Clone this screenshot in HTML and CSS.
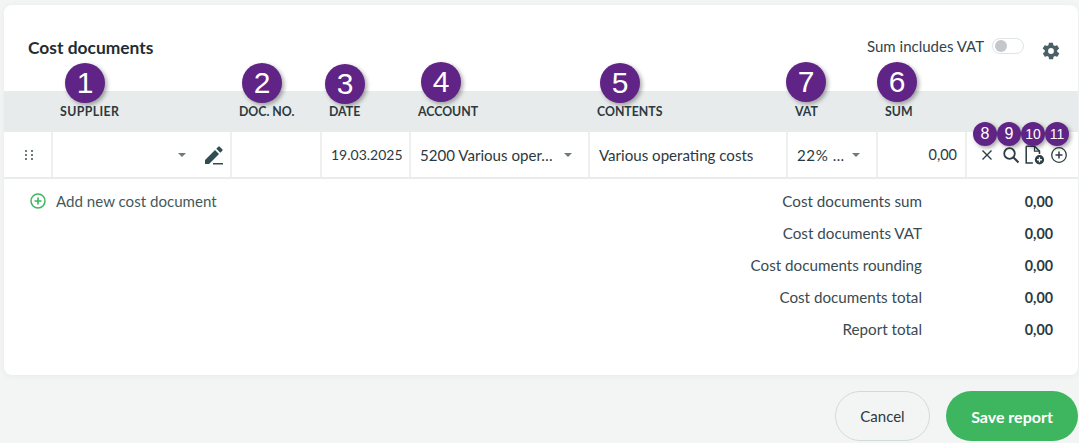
FILE: index.html
```html
<!DOCTYPE html>
<html lang="en">
<head>
<meta charset="utf-8">
<title>Cost documents</title>
<link rel="stylesheet" href="styles.css">
</head>
<body>
<main class="page">
  <section class="card">
    <header class="card-head">
      <h2 class="title">Cost documents</h2>
      <div class="head-tools">
        <span class="toggle-label">Sum includes VAT</span>
        <span class="toggle"><span class="knob"></span></span>
        <svg class="gear" viewBox="0 0 24 24" width="20" height="20"><path fill="#4a5f66" d="M19.4 13a7.6 7.6 0 0 0 0-2l2.1-1.6a.5.5 0 0 0 .1-.7l-2-3.4a.5.5 0 0 0-.6-.2l-2.5 1a7.3 7.3 0 0 0-1.7-1l-.4-2.700a.5.500 0 0 0-.5-.4h-4a.5.500 0 0 0-.5.400l-.4 2.700a7.600 7.600 0 0 0-1.700 1l-2.500-1a.5.500 0 0 0-.6.200l-2 3.400a.5.500 0 0 0 .1.700L4.600 11a7.600 7.600 0 0 0 0 2l-2.100 1.600a.5.500 0 0 0-.1.700l2 3.400c.1.200.4.300.6.200l2.500-1c.5.400 1.100.7 1.700 1l.4 2.700c0 .2.200.4.500.4h4c.3 0 .5-.2.500-.4l.4-2.700c.6-.3 1.200-.6 1.700-1l2.500 1c.2.100.5 0 .6-.2l2-3.400a.5.500 0 0 0-.1-.7L19.400 13zM12 15.500a3.500 3.500 0 1 1 0-7 3.500 3.500 0 0 1 0 7z"/></svg>
      </div>
    </header>

    <div class="table">
      <div class="row row-head">
        <div class="th"></div>
        <div class="th th-wide">SUPPLIER<span class="badge big b1">1</span></div>
        <div class="th">DOC. NO.<span class="badge big b2">2</span></div>
        <div class="th">DATE<span class="badge big b3">3</span></div>
        <div class="th">ACCOUNT<span class="badge big b4">4</span></div>
        <div class="th">CONTENTS<span class="badge big b5">5</span></div>
        <div class="th">VAT<span class="badge big b7">7</span></div>
        <div class="th">SUM<span class="badge big b6">6</span></div>
        <div class="th"></div>
      </div>
      <div class="row row-body">
        <div class="td td-drag">
          <svg viewBox="0 0 8 10" width="8" height="10"><g fill="#6d7a7f"><rect x="0" y="0" width="2" height="2"/><rect x="6" y="0" width="2" height="2"/><rect x="0" y="4" width="2" height="2"/><rect x="6" y="4" width="2" height="2"/><rect x="0" y="8" width="2" height="2"/><rect x="6" y="8" width="2" height="2"/></g></svg>
        </div>
        <div class="td td-supplier">
          <span class="caret"></span>
          <svg class="pen" viewBox="0 0 20 20" width="20" height="20"><path fill="#2f4d52" d="M1 15 11 5l4 4L5 19H1zM12.300 3.700l2-2a1 1 0 0 1 1.400 0l2.600 2.600a1 1 0 0 1 0 1.400l-2 2zM9 18h10v1.400H9z"/></svg>
        </div>
        <div class="td"></div>
        <div class="td td-date">19.03.2025</div>
        <div class="td td-select"><span class="ellip">5200 Various oper…</span><span class="caret"></span></div>
        <div class="td">Various operating costs</div>
        <div class="td td-select"><span class="ellip ellip-wide">22% …</span><span class="caret"></span></div>
        <div class="td td-num">0,00</div>
        <div class="td td-actions">
          <span class="action"><svg viewBox="0 0 16 16" width="16" height="16"><path d="M3.500 3.500l9 9M12.500 3.500l-9 9" stroke="#2c3e44" stroke-width="1.400" fill="none"/></svg><span class="badge small b8">8</span></span>
          <span class="action"><svg viewBox="0 0 18 18" width="18" height="18"><circle cx="7.500" cy="7.500" r="5.300" stroke="#2c3e44" stroke-width="1.800" fill="none"/><path d="M11.500 11.500l5 5" stroke="#2c3e44" stroke-width="2" fill="none"/></svg><span class="badge small b9">9</span></span>
          <span class="action"><svg viewBox="0 0 19 18" width="21" height="20"><path d="M2 1h7.500L14 5.500V8M2 1v15.300h6" stroke="#2c3e44" stroke-width="1.400" fill="none"/><path d="M9.500 1v4.500H14" stroke="#2c3e44" stroke-width="1.100" fill="none"/><circle cx="14" cy="13.300" r="4.200" fill="#2c3e44"/><path d="M11.800 13.300h4.400M14 11.100v4.400" stroke="#fff" stroke-width="1.200"/></svg><span class="badge small b10">10</span></span>
          <span class="action"><svg viewBox="0 0 18 18" width="18" height="18"><circle cx="9" cy="9" r="7.300" stroke="#2c3e44" stroke-width="1.300" fill="none"/><path d="M5.500 9h7M9 5.500v7" stroke="#2c3e44" stroke-width="1.500"/></svg><span class="badge small b11">11</span></span>
        </div>
      </div>
    </div>

    <div class="lower">
      <a class="add-link">
        <svg viewBox="0 0 18 18" width="18" height="18"><circle cx="9" cy="9" r="7" stroke="#3eb660" stroke-width="1.500" fill="none"/><path d="M5.500 9h7M9 5.500v7" stroke="#3eb660" stroke-width="1.600"/></svg>
        <span>Add new cost document</span>
      </a>
      <dl class="totals">
        <div class="total"><dt>Cost documents sum</dt><dd>0,00</dd></div>
        <div class="total"><dt>Cost documents VAT</dt><dd>0,00</dd></div>
        <div class="total"><dt>Cost documents rounding</dt><dd>0,00</dd></div>
        <div class="total"><dt>Cost documents total</dt><dd>0,00</dd></div>
        <div class="total"><dt>Report total</dt><dd>0,00</dd></div>
      </dl>
    </div>
  </section>

  <footer class="actions">
    <button class="btn btn-cancel">Cancel</button>
    <button class="btn btn-save">Save report</button>
  </footer>
</main>
</body>
</html>
```

FILE: styles.css
```css
* { box-sizing: border-box; }
html, body { margin: 0; height: 100%; }
body {
  background: #f3f5f5;
  font-family: "Lato", "Noto Sans", sans-serif;
  color: #2c3a40;
  font-size: 15px;
  overflow: hidden;
}
.page { padding: 5px 1px 0 4px; }
.card {
  background: #fff;
  height: 370px;
  border-radius: 8px;
  box-shadow: 0 1px 6px rgba(40, 60, 60, .05);
}
.card-head {
  height: 86px;
  padding: 31px 17px 0 24px;
  display: flex;
  justify-content: space-between;
  align-items: flex-start;
}
.title { margin: 0; font-size: 17.400px; line-height: 24px; font-weight: 700; color: #1f2d33; }
.head-tools { display: flex; align-items: center; margin-top: -2px; height: 24px; }
.toggle-label { font-size: 15px; color: #33434a; }
.toggle {
  width: 32px; height: 16px; margin-left: 8px; border-radius: 8px;
  border: 1px solid #dfe4e5; background: #fff; display: flex; align-items: center; padding-left: 2px;
}
.knob { width: 12px; height: 12px; border-radius: 50%; background: #c4c8ca; }
.gear { margin-left: 17px; margin-top: 9px; }
.row {
  display: grid;
  grid-template-columns: 49px 179px 90px 89px 179px 198px 90px 89px 1fr;
}
.row-head { height: 41px; background: #e8ebeb; }
.th {
  position: relative;
  padding: 13px 0 0 7px;
  font-size: 12.300px;
  line-height: 16px;
  font-weight: 700;
  color: #2c3a40;
}
.th-wide { letter-spacing: .4px; }
.row-body { height: 47px; border-bottom: 2px solid #e9ecec; }
.td {
  display: flex;
  align-items: center;
  padding: 0 9px;
  border-right: 2px solid #eef0f0;
  font-size: 15.100px;
  color: #2c3a40;
  white-space: nowrap;
  min-width: 0;
}
.td:last-child { border-right: 0; }
.td-drag { justify-content: center; padding-left: 3px; padding-right: 0; }
.td-supplier { justify-content: flex-end; gap: 18px; padding-right: 6px; }
.td-date { font-size: 14px; }
.td-select { justify-content: space-between; padding-right: 16px; }
.td-num { justify-content: flex-end; font-size: 14.500px; padding-right: 8px; }
.ellip { overflow: hidden; }
.ellip-wide { letter-spacing: .6px; }
.caret {
  width: 0; height: 0; flex: none;
  border-left: 4px solid transparent;
  border-right: 4px solid transparent;
  border-top: 4px solid #6d7a7f;
}
.td-actions { padding: 0 0 0 8px; gap: 1px; }
.action { position: relative; display: flex; width: 23px; height: 20px; align-items: center; justify-content: center; flex: none; }
.badge {
  position: absolute;
  display: flex; align-items: center; justify-content: center;
  border-radius: 50%;
  background: #5f2485;
  color: #fff;
  font-family: "Liberation Sans", Arial, sans-serif;
  font-weight: 400;
  letter-spacing: 0;
  box-shadow: 2px 2px 4px rgba(0, 0, 0, .35);
}
.big { width: 40px; height: 40px; font-size: 30px; }
.small { width: 24px; height: 24px; font-size: 16px; left: -2px; top: -23px; }
.b1 { left: 12px; top: -28px; }
.b2 { left: 10px; top: -28px; }
.b3 { left: 3px; top: -27px; }
.b4 { left: 10px; top: -29px; }
.b5 { left: 10px; top: -28px; }
.b7 { left: -2px; top: -29px; }
.b6 { left: -1px; top: -29px; }
.b10, .b11 { font-size: 14px; }
.lower {
  display: flex;
  justify-content: space-between;
  align-items: flex-start;
  padding: 6px 25px 0 25px;
}
.add-link { display: flex; align-items: center; gap: 9px; height: 32px; color: #3f5a5c; font-size: 15.100px; }
.totals { margin: 0; }
.total { display: flex; justify-content: flex-end; align-items: center; height: 32px; }
.total dt { font-size: 15.200px; color: #3a4a50; }
.total dd { margin: 0; width: 131px; text-align: right; font-size: 14.300px; font-weight: 700; color: #2c3a40; }
.actions { display: flex; justify-content: flex-end; gap: 16px; margin-top: 16px; }
.btn {
  height: 50px; border-radius: 25px;
  font-family: inherit; font-size: 15px;
}
.btn-cancel { width: 95px; background: transparent; border: 1px solid #d3d9db; color: #2c3a40; }
.btn-save { width: 132px; background: #3eb660; border: 0; color: #fff; font-weight: 700; font-size: 16px; }
```
